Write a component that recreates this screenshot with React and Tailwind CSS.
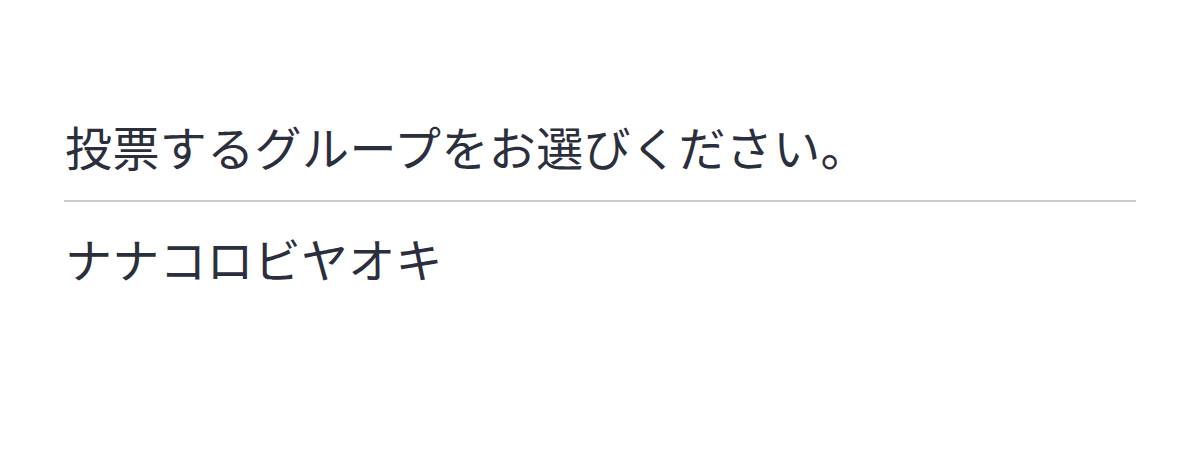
export default function App() {
  return (
    <div
      className="w-[1200px] h-[454px] bg-white text-[#2b2e3c]"
      style={{ fontFamily: '"Noto Sans CJK JP", "Noto Sans", sans-serif' }}
    >
      <div className="pl-[64px] pr-[64px] pt-[122px]">
        <p className="text-[47px] leading-[47px] tracking-[0.4px] pl-px">投票するグループをお選びください。</p>
        <div className="mt-[31px] h-[2px] bg-[#cbcbcd]" />
        <p className="mt-[32px] text-[47px] leading-[47px] tracking-[0.2px] pl-px">ナナコロビヤオキ</p>
      </div>
    </div>
  );
}
